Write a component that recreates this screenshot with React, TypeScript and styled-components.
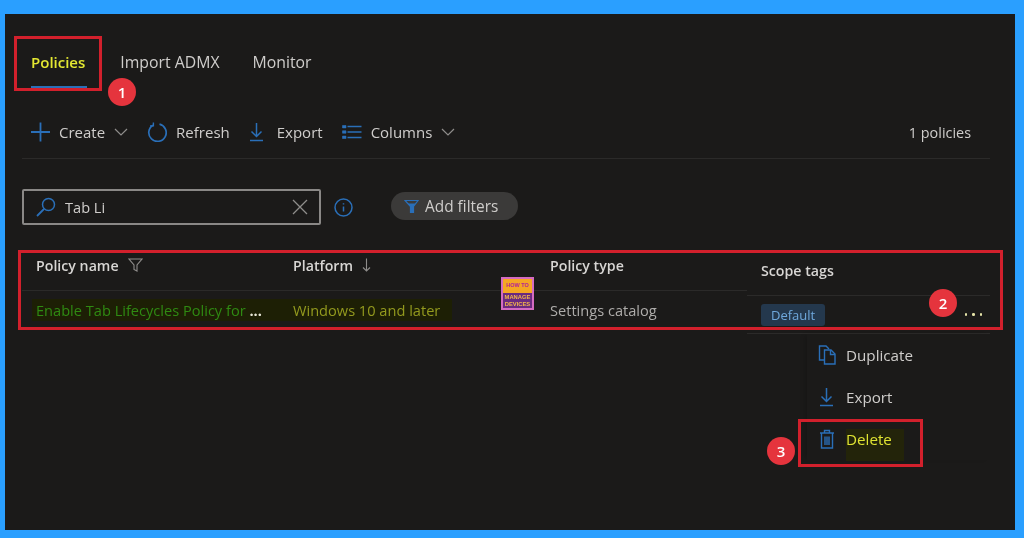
import React from 'react';
import styled, { createGlobalStyle } from 'styled-components';

const GlobalStyle = createGlobalStyle`
  html, body {
    margin: 0;
    padding: 0;
    background: #2a9fff;
  }
  body {
    font-family: "Open Sans", "Noto Sans", "Liberation Sans", sans-serif;
  }
`;

const BLUE = '#2a6fb8';

// Blue page frame around the dark portal
const Frame = styled.div`
  position: relative;
  box-sizing: border-box;
  width: 1024px;
  height: 538px;
  padding: 14px 9px 8px 5px;
  background: #2a9fff;
  overflow: hidden;
  filter: blur(0.3px);
`;

const Panel = styled.div`
  box-sizing: border-box;
  height: 100%;
  padding: 32px 25px 0 17px;
  background: #1b1a19;
  display: flex;
  flex-direction: column;
  color: #cfcdcb;
`;

const Tabs = styled.div`
  display: flex;
  gap: 33px;
  margin-left: 9px;
`;

const Tab = styled.div<{ $active?: boolean }>`
  box-sizing: border-box;
  height: 42px;
  padding-right: ${({ $active }) => ($active ? 2 : 0)}px;
  line-height: 32px;
  font-size: ${({ $active }) => ($active ? 15 : 15.8)}px;
  font-weight: ${({ $active }) => ($active ? 600 : 400)};
  color: ${({ $active }) => ($active ? '#e4e832' : '#cfcdcb')};
  border-bottom: 2px solid ${({ $active }) => ($active ? BLUE : 'transparent')};
`;

const Toolbar = styled.div`
  display: flex;
  align-items: center;
  height: 32px;
  margin-top: 28px;
  padding: 0 19px 10px 9px;
  border-bottom: 1px solid #2b2a29;
`;

const ToolButton = styled.div<{ $gap?: number }>`
  display: flex;
  align-items: center;
  gap: ${({ $gap }) => $gap ?? 9}px;
  margin-right: 19px;
  font-size: 15px;
  white-space: nowrap;
`;

const Count = styled.div`
  margin-left: auto;
  font-size: 14.4px;
`;

const FilterRow = styled.div`
  display: flex;
  align-items: center;
  margin-top: 30px;
`;

const SearchBox = styled.div`
  box-sizing: border-box;
  display: flex;
  align-items: center;
  gap: 9px;
  width: 299px;
  height: 36px;
  padding: 0 11px 0 12px;
  border: 2px solid #8a8886;
  border-radius: 2px;
  font-size: 14.6px;
`;

const SearchValue = styled.span`
  flex: 1;
`;

const InfoWrap = styled.div`
  display: flex;
  margin-left: 13px;
`;

const FilterPill = styled.div`
  display: flex;
  align-items: center;
  gap: 6px;
  width: 127px;
  height: 28px;
  box-sizing: border-box;
  margin: 0 0 2px 38px;
  padding-left: 13px;
  border-radius: 14px;
  background: #3b3a39;
  font-size: 15.4px;
`;

const Table = styled.div`
  display: flex;
  margin-top: 15px;
`;

const Column = styled.div<{ $width: number; $offset?: number }>`
  box-sizing: border-box;
  width: ${({ $width }) => $width}px;
  padding-top: ${({ $offset }) => $offset ?? 0}px;
`;

const HeaderCell = styled.div`
  display: flex;
  align-items: center;
  gap: 9px;
  box-sizing: border-box;
  height: 51px;
  padding-left: 14px;
  font-size: 14.2px;
  font-weight: 600;
  color: #d8d6d4;
  border-bottom: 1px solid #2b2a29;
`;

const Cell = styled.div<{ $color?: string; $ruled?: boolean }>`
  display: flex;
  align-items: center;
  box-sizing: border-box;
  height: 38px;
  padding-left: 14px;
  padding-right: 6px;
  font-size: 14.6px;
  white-space: nowrap;
  color: ${({ $color }) => $color ?? '#aeacaa'};
  border-bottom: ${({ $ruled }) => ($ruled ? '1px solid #2b2a29' : 'none')};
`;

// Dark highlighter band that runs across the name and platform cells
const NameMark = styled.span`
  flex: 1;
  margin: 0 -6px 0 -4px;
  padding: 1px 0 1px 4px;
  background: #1d1f05;
`;

const PlatformMark = styled.span`
  margin-left: -14px;
  padding: 1px 12px 1px 14px;
  background: #1d1f05;
`;

const Ellipsis = styled.span`
  color: #e8e6d8;
  font-weight: 700;
`;

const Chip = styled.span`
  padding: 2px 10px;
  border-radius: 3px;
  background: #24384d;
  color: #6fa8dc;
  font-size: 13px;
`;

const Dots = styled.span`
  display: flex;
  gap: 5px;
  margin-left: auto;
  margin-right: 2px;
  padding: 6px 0;
`;

const Dot = styled.i`
  width: 2.5px;
  height: 2.5px;
  border-radius: 50%;
  background: #e6e4a8;
`;

// Context menu opened from the row's dots
const Menu = styled.div`
  position: absolute;
  left: 807px;
  top: 334px;
  width: 183px;
  background: #1b1a19;
  box-shadow: -4px 0 5px -2px rgba(0, 0, 0, 0.18);
`;

const MenuItem = styled.div<{ $marked?: boolean }>`
  display: flex;
  align-items: center;
  gap: 10px;
  height: 42px;
  padding-left: 10px;
  font-size: 15.2px;
  color: ${({ $marked }) => ($marked ? '#dfe332' : '#cfcdcb')};
`;

const MenuText = styled.span`
  background: #23240a;
  padding: 0 12px 12px 0;
  margin-bottom: -12px;
`;

const IconSlot = styled.span`
  display: flex;
  justify-content: center;
  width: 19px;
`;

// Red callouts drawn on top of the screenshot
const Callout = styled.div<{ $x: number; $y: number; $w: number; $h: number }>`
  position: absolute;
  box-sizing: border-box;
  left: ${({ $x }) => $x}px;
  top: ${({ $y }) => $y}px;
  width: ${({ $w }) => $w}px;
  height: ${({ $h }) => $h}px;
  border: 3px solid #d2202c;
`;

const Badge = styled.div<{ $x: number; $y: number }>`
  position: absolute;
  left: ${({ $x }) => $x}px;
  top: ${({ $y }) => $y}px;
  width: 28px;
  height: 28px;
  border-radius: 50%;
  background: #e5343d;
  color: #fff;
  font-size: 15px;
  font-weight: 600;
  line-height: 28px;
  text-align: center;
`;

const Logo = styled.div`
  position: absolute;
  left: 501px;
  top: 277px;
  box-sizing: border-box;
  width: 33px;
  height: 33px;
  border: 2px solid #d46bc0;
  background: #f5a623;
  display: flex;
  flex-direction: column;
  font-family: "Liberation Sans", sans-serif;
  font-weight: 700;
  text-align: center;
  overflow: hidden;
`;

const LogoTop = styled.div`
  height: 13px;
  padding-top: 2px;
  font-size: 5.5px;
  line-height: 8px;
  color: #b0209c;
`;

const LogoBottom = styled.div`
  flex: 1;
  background: #6a2a80;
  color: #f5b84a;
  font-size: 5.8px;
  line-height: 7px;
  padding-top: 1px;
`;

const Stroke = styled.svg`
  display: block;
  flex: none;
  fill: none;
  stroke: ${BLUE};
  stroke-width: 1.4;
`;

const GreyStroke = styled(Stroke)`
  stroke: #8f8d8b;
`;

const PlusIcon = () => (
  <Stroke width="19" height="20" viewBox="0 0 19 20">
    <path d="M9.5 0.5v19M0 10h19" strokeWidth="1.8" />
  </Stroke>
);

const Chevron = () => (
  <GreyStroke width="14" height="8" viewBox="0 0 14 8">
    <path d="M1 1l6 6 6-6" strokeWidth="1.2" />
  </GreyStroke>
);

const RefreshIcon = () => (
  <Stroke width="20" height="20" viewBox="0 0 20 20">
    <path d="M6 3.2a8.7 8.7 0 1 0 6.5-1" strokeWidth="1.7" />
    <path d="M6.4 0.5v3.4h-3.4" strokeWidth="1.4" />
  </Stroke>
);

const DownloadIcon = () => (
  <Stroke width="15" height="20" viewBox="0 0 15 20">
    <path d="M7.5 1v13.5M2.5 9.5l5 5 5-5M1 18.5h13" strokeWidth="1.5" />
  </Stroke>
);

const ColumnsIcon = () => (
  <Stroke width="20" height="14" viewBox="0 0 20 14">
    <path d="M5.5 1.5h14M5.5 7h14M5.5 12.5h14" strokeWidth="1.5" />
    <path d="M0.5 0.5h3.5v2.4h-3.5zM0.5 5.8h3.5v2.4h-3.5zM0.5 11.1h3.5v2.4h-3.5z" fill={BLUE} strokeWidth="0.6" />
  </Stroke>
);

const SearchIcon = () => (
  <Stroke width="20" height="20" viewBox="0 0 20 20">
    <circle cx="12.5" cy="7.5" r="6" strokeWidth="1.5" />
    <path d="M8 12L1 19" strokeWidth="1.8" />
  </Stroke>
);

const ClearIcon = () => (
  <GreyStroke width="16" height="16" viewBox="0 0 16 16">
    <path d="M1 1l14 14M15 1L1 15" strokeWidth="1.3" />
  </GreyStroke>
);

const InfoIcon = () => (
  <Stroke width="19" height="19" viewBox="0 0 19 19">
    <circle cx="9.5" cy="9.5" r="8.5" strokeWidth="1.5" />
    <path d="M9.5 8.5v5M9.5 5.2v1.4" strokeWidth="1.5" />
  </Stroke>
);

const FunnelIcon = () => (
  <Stroke width="15" height="15" viewBox="0 0 15 15">
    <path d="M1 1.5h13L9.5 7.5V13.5H6.5V7.5z" strokeWidth="1.2" />
    <path d="M3.5 4.5h8L9.5 7.5V13.5H6.5V7.5z" fill={BLUE} stroke="none" />
  </Stroke>
);

const HeaderFunnel = () => (
  <GreyStroke width="15" height="14" viewBox="0 0 15 14">
    <path d="M1 1h13L9 7v6l-3-1.5V7z" strokeWidth="1.1" />
  </GreyStroke>
);

const SortArrow = () => (
  <GreyStroke width="9" height="14" viewBox="0 0 9 14">
    <path d="M4.5 0.5v12.5M1 9.5L4.5 13 8 9.5" strokeWidth="1.1" />
  </GreyStroke>
);

const CopyIcon = () => (
  <Stroke width="18" height="20" viewBox="0 0 18 20">
    <path d="M6 15H1.5V1H8l3 3" />
    <path d="M6.5 5H13l4 4v10H6.5z" />
    <path d="M12.5 5v4.5H17" />
  </Stroke>
);

const TrashIcon = () => (
  <Stroke width="16" height="20" viewBox="0 0 16 20">
    <path d="M1 4h14M5.5 4V1.5h5V4M2.5 4v15h11V4" />
    <path d="M6 7.5v8.5M8 7.5v8.5M10 7.5v8.5" />
  </Stroke>
);

export default function App() {
  return (
    <Frame>
      <GlobalStyle />
      <Panel>
        <Tabs>
          <Tab $active>Policies</Tab>
          <Tab>Import ADMX</Tab>
          <Tab>Monitor</Tab>
        </Tabs>

        <Toolbar>
          <ToolButton>
            <PlusIcon />
            Create
            <Chevron />
          </ToolButton>
          <ToolButton>
            <RefreshIcon />
            Refresh
          </ToolButton>
          <ToolButton $gap={13}>
            <DownloadIcon />
            Export
          </ToolButton>
          <ToolButton>
            <ColumnsIcon />
            Columns
            <Chevron />
          </ToolButton>
          <Count>1 policies</Count>
        </Toolbar>

        <FilterRow>
          <SearchBox>
            <SearchIcon />
            <SearchValue>Tab Li</SearchValue>
            <ClearIcon />
          </SearchBox>
          <InfoWrap>
            <InfoIcon />
          </InfoWrap>
          <FilterPill>
            <FunnelIcon />
            Add filters
          </FilterPill>
        </FilterRow>

        <Table>
          <Column $width={257}>
            <HeaderCell>
              Policy name
              <HeaderFunnel />
            </HeaderCell>
            <Cell $color="#2f8a12">
              <NameMark>
                Enable Tab Lifecycles Policy for <Ellipsis>...</Ellipsis>
              </NameMark>
            </Cell>
          </Column>
          <Column $width={257}>
            <HeaderCell>
              Platform
              <SortArrow />
            </HeaderCell>
            <Cell $color="#939a1e">
              <PlatformMark>Windows 10 and later</PlatformMark>
            </Cell>
          </Column>
          <Column $width={211}>
            <HeaderCell>Policy type</HeaderCell>
            <Cell>Settings catalog</Cell>
          </Column>
          <Column $width={243} $offset={5}>
            <HeaderCell>Scope tags</HeaderCell>
            <Cell $ruled>
              <Chip>Default</Chip>
              <Dots>
                <Dot />
                <Dot />
                <Dot />
              </Dots>
            </Cell>
          </Column>
        </Table>
      </Panel>

      <Menu>
        <MenuItem>
          <IconSlot>
            <CopyIcon />
          </IconSlot>
          Duplicate
        </MenuItem>
        <MenuItem>
          <IconSlot>
            <DownloadIcon />
          </IconSlot>
          Export
        </MenuItem>
        <MenuItem $marked>
          <IconSlot>
            <TrashIcon />
          </IconSlot>
          <MenuText>Delete</MenuText>
        </MenuItem>
      </Menu>

      <Logo>
        <LogoTop>HOW TO</LogoTop>
        <LogoBottom>
          MANAGE
          <br />
          DEVICES
        </LogoBottom>
      </Logo>

      <Callout $x={14} $y={36} $w={88} $h={55} />
      <Callout $x={18} $y={250} $w={985} $h={80} />
      <Callout $x={798} $y={419} $w={125} $h={48} />
      <Badge $x={108} $y={78}>1</Badge>
      <Badge $x={929} $y={289}>2</Badge>
      <Badge $x={767} $y={437}>3</Badge>
    </Frame>
  );
}
